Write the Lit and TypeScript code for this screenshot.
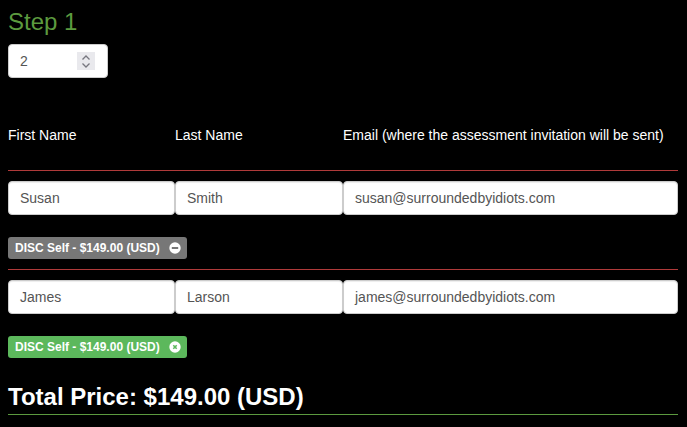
import { LitElement, html, svg, css } from "lit";
import { customElement } from "lit/decorators.js";

const people = [
  { first: "Susan", last: "Smith", email: "susan@surroundedbyidiots.com", tone: "grey", icon: "minus" },
  { first: "James", last: "Larson", email: "james@surroundedbyidiots.com", tone: "green", icon: "close" },
];

@customElement("app-root")
export class AppRoot extends LitElement {
  static styles = css`
    :host { display: block; height: 427px; overflow: hidden; background: #000; color: #fff; font-family: "Liberation Sans", Arial, sans-serif; font-size: 14px; line-height: 20px; }
    * { box-sizing: border-box; }
    .page { padding: 9px 9px 0 8px; }
    h2 { margin: 0; font-weight: 400; font-size: 24px; line-height: 26px; color: #5c9a3f; }
    .spin { margin-top: 9px; width: 100px; height: 34px; background: #fff; border: 1px solid #ccc; border-radius: 4px; display: flex; align-items: center; justify-content: space-between; padding: 0 11px; color: #555; }
    .arrows { width: 18px; height: 18px; margin-right: 1px; background: #e9e9ed; display: flex; align-items: center; justify-content: center; }
    .grid { display: grid; grid-template-columns: 167px 168px 335px; }
    .heads { margin-top: 47px; height: 20px; }
    .rule { height: 1px; background: #b03a3a; }
    .r1 { margin-top: 25px; }
    .r2 { margin-top: 10px; }
    .inputs { margin-top: 10px; }
    .field { height: 34px; background: #fff; border: 1px solid #ccc; border-radius: 4px; padding: 6px 11px; color: #555; box-shadow: inset 0 1px 1px rgba(0,0,0,.075); }
    .tagline { padding-top: 22px; height: 44px; }
    .tag { display: inline-flex; align-items: center; height: 22px; padding: 0 6px 0 7px; border-radius: 3px; font-size: 12px; font-weight: 700; line-height: 22px; color: #fff; vertical-align: top; }
    .tag svg { margin-left: 9px; display: block; }
    .grey { background: #777; }
    .green { background: #5cb85c; }
    .total { margin: 26px 0 0; font-size: 24px; font-weight: 700; line-height: 26px; }
    .green-rule { margin-top: 4px; height: 1px; background: #5c9a3f; }
  `;

  private icon(kind: string, tone: string) {
    const fill = tone === "grey" ? "#777" : "#5cb85c";
    return html`<svg width="12" height="12" viewBox="0 0 12 12">
      <circle cx="6" cy="6" r="5.7" fill="#fff"></circle>
      ${kind === "minus"
        ? svg`<rect x="2.8" y="5" width="6.4" height="2" fill=${fill}></rect>`
        : svg`<path d="M4.3 4.3 7.7 7.7M7.7 4.3 4.3 7.7" stroke=${fill} stroke-width="1.6" fill="none"></path>`}
    </svg>`;
  }

  render() {
    return html`<div class="page">
      <h2>Step 1</h2>
      <div class="spin">
        <span>2</span>
        <span class="arrows"><svg width="10" height="15" viewBox="0 0 10 15" fill="none" stroke="#77777f" stroke-width="1.3"><path d="M1.5 5.5 5 2l3.5 3.5M1.5 9.5 5 13l3.5-3.5"></path></svg></span>
      </div>
      <div class="grid heads">
        <span>First Name</span><span>Last Name</span><span>Email (where the assessment invitation will be sent)</span>
      </div>
      ${people.map((p, i) => html`
        <div class="rule ${i === 0 ? "r1" : "r2"}"></div>
        <div class="grid inputs">
          <div class="field">${p.first}</div><div class="field">${p.last}</div><div class="field">${p.email}</div>
        </div>
        <div class="tagline"><span class="tag ${p.tone}">DISC Self - $149.00 (USD)${this.icon(p.icon, p.tone)}</span></div>
      `)}
      <h3 class="total">Total Price: $149.00 (USD)</h3>
      <div class="green-rule"></div>
    </div>`;
  }
}
